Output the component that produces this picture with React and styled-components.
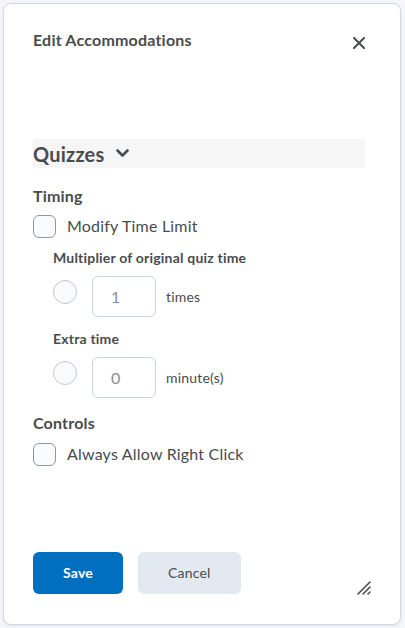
import React from "react";
import styled, { createGlobalStyle } from "styled-components";

const Global = createGlobalStyle`
  html, body { margin: 0; padding: 0; background: #ffffff; }
  body { font-family: Lato, "Open Sans", "Liberation Sans", sans-serif; color: #494c4e; letter-spacing: 0.2px; }
  * { box-sizing: border-box; }
`;

const Page = styled.div`
  width: 405px;
  height: 628px;
  padding: 3px 4px 3px 3px;
  background: #f4f6f9;
`;

const Dialog = styled.div`
  width: 398px;
  height: 622px;
  background: #fff;
  border: 1px solid #d3d9e3;
  border-radius: 8px;
  box-shadow: 0 1px 3px rgba(0, 0, 0, 0.08);
  display: flex;
  flex-direction: column;
  padding: 26px 35px 29px 29px;
`;

const Header = styled.div`
  display: flex;
  justify-content: space-between;
  align-items: flex-start;
`;

const Title = styled.h2`
  margin: 0;
  font-size: 16px;
  line-height: 20px;
  font-weight: 700;
  color: #494c4e;
`;

const CloseButton = styled.button`
  border: 0;
  background: none;
  padding: 0;
  margin: 7px 0 0 0;
  width: 12px;
  height: 12px;
  display: flex;
  cursor: pointer;
`;

const Body = styled.div`
  display: flex;
  flex-direction: column;
  margin-top: 89px;
`;

const ToolHeader = styled.div`
  display: flex;
  align-items: center;
  gap: 12px;
  height: 29px;
  background: #f6f6f6;
  font-size: 20px;
  font-weight: 700;
  color: #494c4e;
`;

const SectionLabel = styled.div`
  font-size: 16px;
  line-height: 20px;
  font-weight: 700;
  margin-top: ${(p) => p.$top}px;
`;

const SubLabel = styled.div`
  font-size: 14px;
  line-height: 18px;
  font-weight: 700;
  margin-top: ${(p) => p.$top}px;
  padding-left: 20px;
`;

const CheckRow = styled.label`
  display: flex;
  align-items: center;
  gap: 11px;
  margin-top: ${(p) => p.$top}px;
  font-size: 16px;
  line-height: 24px;
`;

const CheckBox = styled.span`
  width: 23px;
  height: 23px;
  border: 1px solid #90969a;
  border-radius: 6px;
  background: #f9fbff;
  display: block;
`;

const OptionRow = styled.div`
  display: flex;
  align-items: center;
  margin-top: 9px;
  padding-left: 20px;
  height: 41px;
`;

const Radio = styled.span`
  width: 24px;
  height: 24px;
  border-radius: 50%;
  border: 1px solid #c2c7cc;
  background: #f9fbff;
  margin-top: -9px;
  margin-right: 15px;
  display: block;
`;

const NumberBox = styled.div`
  width: 64px;
  height: 41px;
  border: 1px solid #cdd5dc;
  border-radius: 6px;
  display: flex;
  align-items: center;
  padding-left: 18px;
  font-size: 16px;
  color: #8a8f93;
  margin-right: 10px;
`;

const Unit = styled.span`
  font-size: 14px;
  color: #494c4e;
`;

const Footer = styled.div`
  margin-top: auto;
  display: flex;
  align-items: center;
  gap: 15px;
`;

const Button = styled.button`
  height: 42px;
  padding: 0 30px 1px;
  border: 0;
  border-radius: 6px;
  font-family: Lato, "Open Sans", "Liberation Sans", sans-serif;
  letter-spacing: 0.2px;
  font-size: 14px;
  font-weight: ${(p) => (p.$primary ? 700 : 400)};
  background: ${(p) => (p.$primary ? "#006fbf" : "#e3e9f1")};
  color: ${(p) => (p.$primary ? "#ffffff" : "#494c4e")};
  cursor: pointer;
`;

const Grip = styled.span`
  margin-left: auto;
  margin-right: -6px;
  margin-top: 30px;
  display: flex;
`;

export default function App() {
  return (
    <>
      <Global />
      <Page>
        <Dialog>
          <Header>
            <Title>Edit Accommodations</Title>
            <CloseButton aria-label="Close">
              <svg width="12" height="12" viewBox="0 0 12 12">
                <path d="M1 1 L11 11 M11 1 L1 11" stroke="#494c4e" strokeWidth="2" strokeLinecap="round" />
              </svg>
            </CloseButton>
          </Header>
          <Body>
            <ToolHeader>
              <span>Quizzes</span>
              <svg width="13" height="9" viewBox="0 0 13 9">
                <path d="M1.5 1.5 L6.5 6.5 L11.5 1.5" fill="none" stroke="#494c4e" strokeWidth="2.6" strokeLinecap="round" strokeLinejoin="round" />
              </svg>
            </ToolHeader>
            <SectionLabel $top={18}>Timing</SectionLabel>
            <CheckRow $top={8}>
              <CheckBox />
              Modify Time Limit
            </CheckRow>
            <SubLabel $top={11}>Multiplier of original quiz time</SubLabel>
            <OptionRow>
              <Radio />
              <NumberBox>1</NumberBox>
              <Unit>times</Unit>
            </OptionRow>
            <SubLabel $top={13}>Extra time</SubLabel>
            <OptionRow>
              <Radio />
              <NumberBox>0</NumberBox>
              <Unit>minute(s)</Unit>
            </OptionRow>
            <SectionLabel $top={15}>Controls</SectionLabel>
            <CheckRow $top={9}>
              <CheckBox />
              Always Allow Right Click
            </CheckRow>
          </Body>
          <Footer>
            <Button $primary>Save</Button>
            <Button>Cancel</Button>
            <Grip>
              <svg width="14" height="14" viewBox="0 0 14 14">
                <path d="M13 1 L1 13 M13 6 L6 13 M13 11 L11 13" stroke="#494c4e" strokeWidth="1.6" strokeLinecap="round" />
              </svg>
            </Grip>
          </Footer>
        </Dialog>
      </Page>
    </>
  );
}
